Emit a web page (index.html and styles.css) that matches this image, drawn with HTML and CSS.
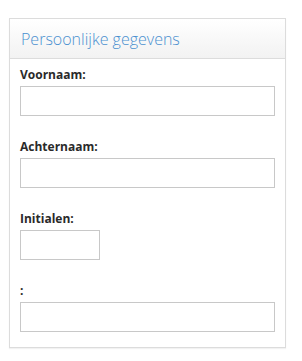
FILE: index.html
```html
<!DOCTYPE html>
<html lang="nl">
<head>
    <meta charset="UTF-8">
    <meta name="viewport" content="width=device-width, initial-scale=1.0">
    <title>Persoonlijke gegevens</title>
    <link rel="stylesheet" href="styles.css">
</head>
<body>
    <div class="panel">
        <div class="panel-heading">
            <h3>Persoonlijke gegevens</h3>
        </div>
        <div class="panel-body">
            <div class="field">
                <label for="voornaam">Voornaam:</label>
                <input type="text" id="voornaam">
            </div>
            <div class="field">
                <label for="achternaam">Achternaam:</label>
                <input type="text" id="achternaam">
            </div>
            <div class="field">
                <label for="initialen">Initialen:</label>
                <input type="text" id="initialen" class="short">
            </div>
            <div class="field">
                <label for="overig">:</label>
                <input type="text" id="overig">
            </div>
        </div>
    </div>
</body>
</html>
```

FILE: styles.css
```css
body {
    margin: 0;
    padding: 18px 16px 12px 9px;
    font-family: "Open Sans", Arial, sans-serif;
    background: #fff;
}
.panel {
    border: 1px solid #dcdcdc;
    box-shadow: 0 1px 1px rgba(0, 0, 0, 0.05);
}
.panel-heading {
    height: 39px;
    padding: 0 11px;
    border-bottom: 1px solid #dcdcdc;
    background: linear-gradient(to bottom, #ffffff, #f2f2f2);
    display: flex;
    align-items: center;
}
.panel-heading h3 {
    margin: 0;
    font-size: 16px;
    font-weight: 300;
    color: #4a90d0;
}
.panel-body {
    padding: 8px 10px 15px 10px;
    display: flex;
    flex-direction: column;
    gap: 23px;
}
.field label {
    display: block;
    font-size: 12px;
    font-weight: bold;
    color: #2a2a2a;
    line-height: 16px;
    margin-bottom: 3px;
}
.field input {
    display: block;
    box-sizing: border-box;
    width: 100%;
    height: 30px;
    margin: 0;
    border: 1px solid #c8c8c8;
    background: #fff;
    padding: 4px 6px;
}
.field input.short {
    width: 80px;
}
```
